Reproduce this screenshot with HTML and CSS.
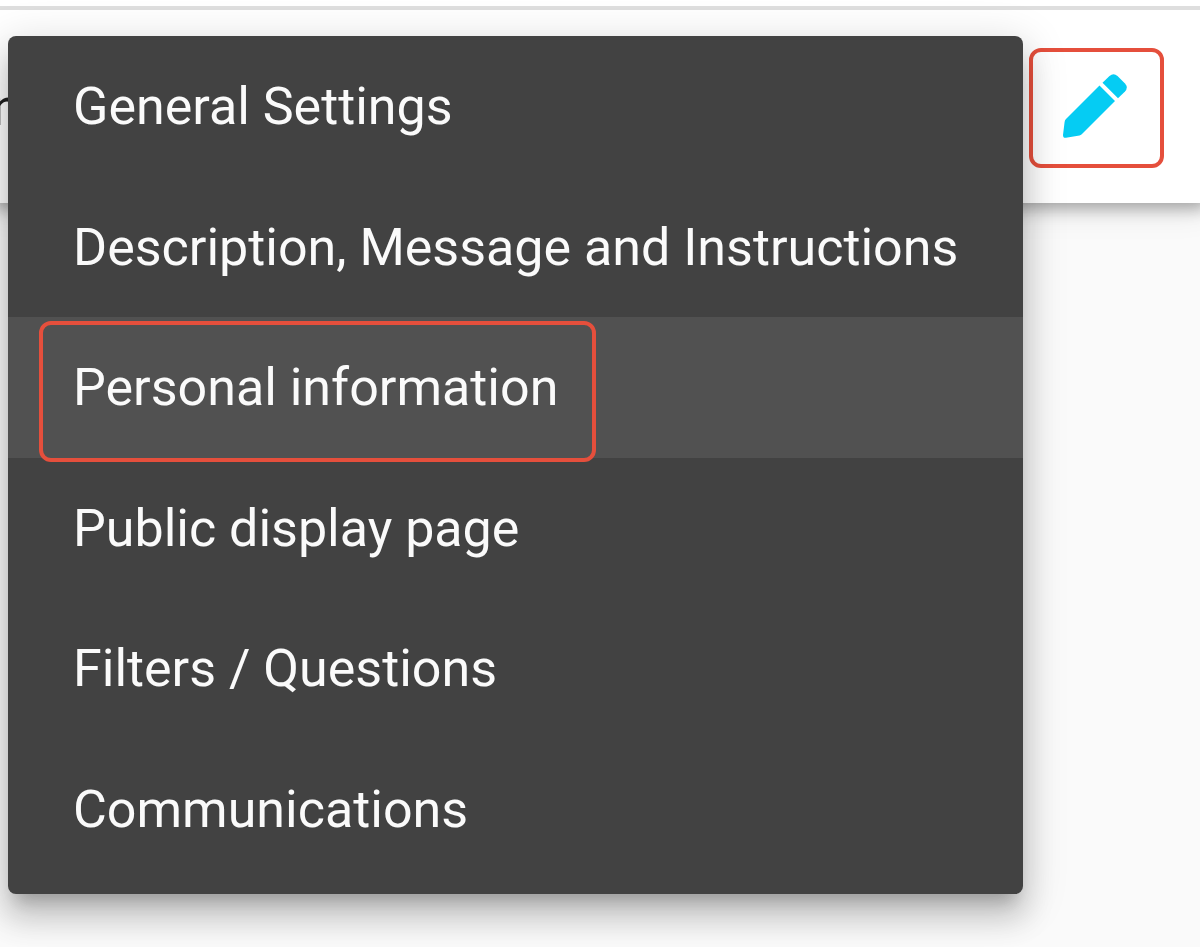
FILE: index.html
```
<!DOCTYPE html>
<html lang="en">
<head>
<meta charset="utf-8">
<meta name="viewport" content="width=device-width, initial-scale=1">
<title>Settings menu</title>
<link rel="stylesheet" href="styles.css">
</head>
<body>
<header class="toolbar">
  <span class="toolbar-title">n</span>
  <button class="edit-button" type="button" aria-label="Edit" aria-haspopup="menu" aria-expanded="true">
    <svg class="edit-icon" viewBox="0 0 66 66" aria-hidden="true">
      <path d="M37.500 12.500 53 28 20.500 60.500Q19.300 62 17.500 62.400L4 64.800Q1 65.200 1 62L2.600 49Q2.800 47.200 4 46Z"/>
      <path d="M40.500 9.800 47.500 3Q51.500-.5 55.500 3L63 10.500Q66.500 14.500 63 18.500L56 25.300Z"/>
    </svg>
  </button>
</header>
<nav class="menu" role="menu" aria-label="Edit">
  <button class="menu-item" type="button" role="menuitem">General Settings</button>
  <button class="menu-item" type="button" role="menuitem">Description, Message and Instructions</button>
  <button class="menu-item menu-item-active" type="button" role="menuitem">Personal information</button>
  <button class="menu-item" type="button" role="menuitem">Public display page</button>
  <button class="menu-item" type="button" role="menuitem">Filters / Questions</button>
  <button class="menu-item" type="button" role="menuitem">Communications</button>
</nav>
</body>
</html>
```
FILE: styles.css
```
*,
*::after {
  box-sizing: border-box;
}

body {
  margin: 0;
  min-height: 100vh;
  overflow: hidden;
  background: #fafafa;
  font-family: Roboto, "Liberation Sans", sans-serif;
  font-size: 52px;
  line-height: 60px;
}

button {
  border: 0;
  padding: 0;
  background: none;
  color: inherit;
  font: inherit;
  cursor: pointer;
}

.toolbar {
  display: flex;
  align-items: center;
  justify-content: space-between;
  margin-top: 6px;
  padding: 8px 36px 6px 0;
  height: 197px;
  border-top: 4px solid #dedede;
  background: #fff;
  box-shadow: 0 -6px 0 #fff, 0 0 14px 6px rgba(0, 0, 0, 0.28), 0 0 30px 8px rgba(0, 0, 0, 0.1);
}

.toolbar-title {
  margin-left: -8px;
  color: #212121;
}

.edit-button {
  display: grid;
  place-items: center;
  width: 135px;
  height: 120px;
  padding: 0 4px 4px 0;
  border: 4px solid #e54f3c;
  border-radius: 12px;
}

.edit-icon {
  width: 66px;
  height: 66px;
  fill: #05ccf3;
}

/* Open menu, floating over the toolbar */
.menu {
  position: absolute;
  top: 36px;
  left: 8px;
  display: grid;
  grid-auto-rows: 1fr;
  min-height: 858px;
  padding-bottom: 15px;
  border-radius: 8px;
  background: #424242;
  color: #fafafa;
  box-shadow: 0 15px 15px -9px rgba(0, 0, 0, 0.2), 0 24px 30px 3px rgba(0, 0, 0, 0.14), 0 9px 42px 6px rgba(0, 0, 0, 0.13);
}

.menu-item {
  padding: 2px 65px 0;
  text-align: left;
  white-space: nowrap;
}

.menu-item-active {
  position: relative;
  background: #515151;
}

/* Frame that marks the active entry */
.menu-item-active::after {
  content: "";
  position: absolute;
  top: 4px;
  left: 31px;
  width: 557px;
  height: 141px;
  border: 4px solid #e54f3c;
  border-radius: 12px;
}
```
